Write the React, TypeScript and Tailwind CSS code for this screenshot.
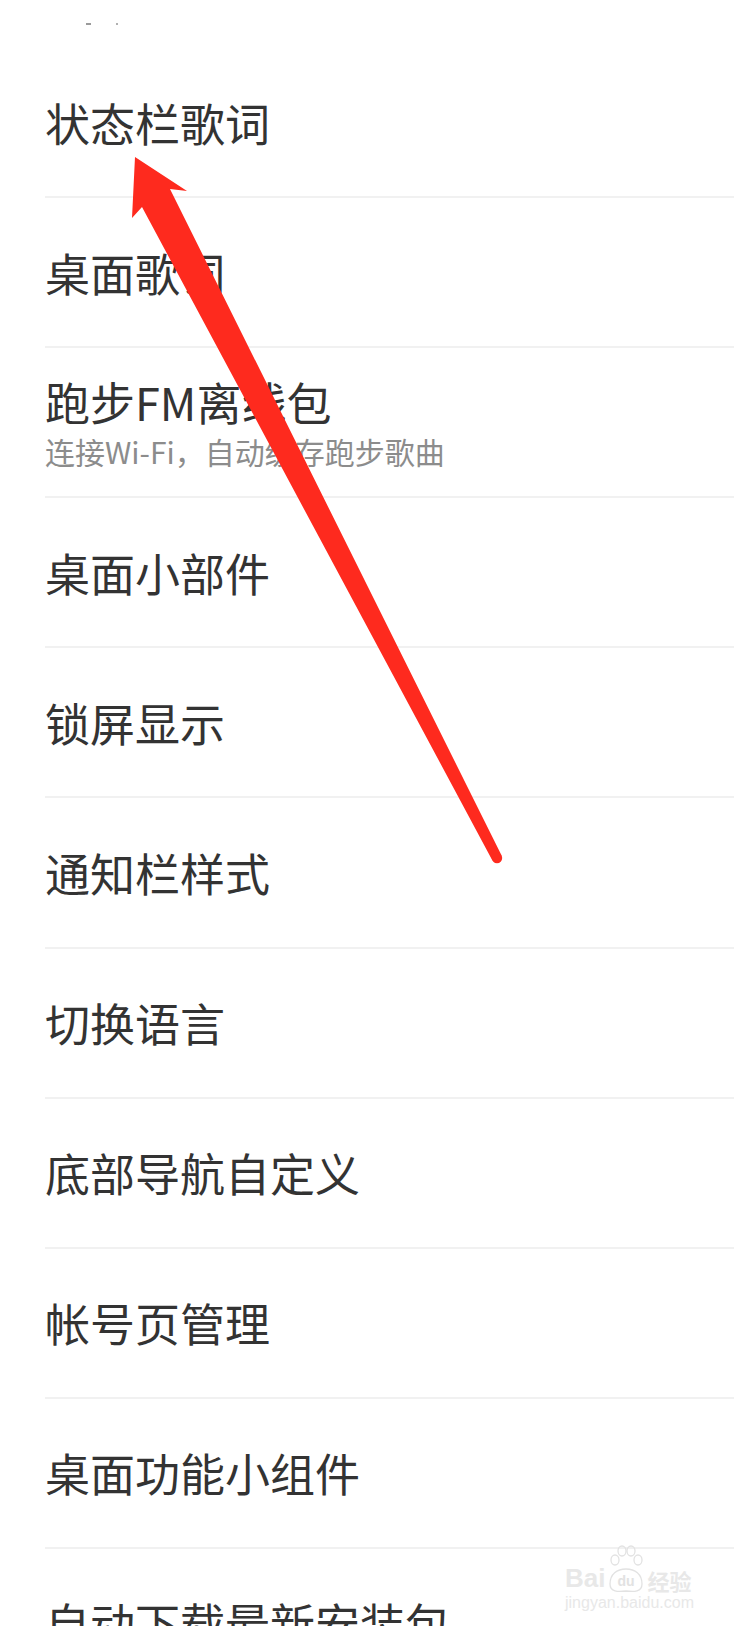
import React from "react";

type Row = { title: string; sub?: string };

const rows: Row[] = [
  { title: "状态栏歌词" },
  { title: "桌面歌词" },
  { title: "跑步FM离线包", sub: "连接Wi-Fi，自动缓存跑步歌曲" },
  { title: "桌面小部件" },
  { title: "锁屏显示" },
  { title: "通知栏样式" },
  { title: "切换语言" },
  { title: "底部导航自定义" },
  { title: "帐号页管理" },
  { title: "桌面功能小组件" },
  { title: "自动下载最新安装包" },
];

function Arrow() {
  return (
    <svg
      className="absolute inset-0 pointer-events-none"
      width="734"
      height="1626"
      viewBox="0 0 734 1626"
    >
      <polygon
        points="135,157 187,191 170,189 501.6,855.6 492.4,860.4 142,207 132,218"
        fill="#fe2a1e"
      />
      <circle cx="497" cy="858" r="5.2" fill="#fe2a1e" />
    </svg>
  );
}

function Watermark() {
  return (
    <div className="absolute left-[565px] top-[1544px] flex flex-col items-start pointer-events-none">
      <div className="flex items-end gap-[2px]">
        <span className="text-[26px] leading-none font-bold text-[#e8e8e8] font-['Liberation_Sans',sans-serif] mb-[3px]">
          Bai
        </span>
        <svg width="38" height="50" viewBox="0 0 38 50">
          <g fill="none" stroke="#e2e2e2" strokeWidth="1.3">
            <ellipse cx="8" cy="16" rx="4" ry="5" />
            <ellipse cx="15" cy="7" rx="4" ry="5" />
            <ellipse cx="24" cy="7" rx="4" ry="5" />
            <ellipse cx="31" cy="16" rx="4" ry="5" />
            <path d="M3 40 C3 30 10 25 19 25 C28 25 35 30 35 40 C35 48 27 48 19 47 C11 48 3 48 3 40 Z" />
          </g>
          <text
            x="19"
            y="42"
            textAnchor="middle"
            fontSize="14"
            fontWeight="bold"
            fill="#e2e2e2"
            fontFamily="Liberation Sans, sans-serif"
          >
            du
          </text>
        </svg>
        <span className="text-[22px] leading-none font-bold text-[#e8e8e8] font-['Noto_Sans_CJK_SC',sans-serif] mb-[3px]">
          经验
        </span>
      </div>
      <span className="text-[16px] leading-none text-[#e8e8e8] font-['Liberation_Sans',sans-serif] mt-[1px]">
        jingyan.baidu.com
      </span>
    </div>
  );
}

export default function App() {
  return (
    <div className="relative w-[734px] h-[1626px] overflow-hidden bg-white font-['Noto_Sans_CJK_SC','Noto_Sans',sans-serif]">
      <div className="h-[48px] flex items-start gap-[25px] pl-[86px] pt-[23px]">
        <span className="w-[5px] h-[2px] bg-[#9a9a9a]" />
        <span className="w-[2px] h-[2px] bg-[#b0b0b0]" />
      </div>
      {rows.map((r, i) => (
        <div
          key={i}
          className="ml-[45px] h-[150.1px] border-b-2 border-[#f1f1f1] flex flex-col justify-center"
        >
          <div className="text-[45px] leading-none text-[#333333]">{r.title}</div>
          {r.sub && (
            <div className="text-[30px] leading-none text-[#8c8c8c] mt-[12px]">{r.sub}</div>
          )}
        </div>
      ))}
      <Watermark />
      <Arrow />
    </div>
  );
}
